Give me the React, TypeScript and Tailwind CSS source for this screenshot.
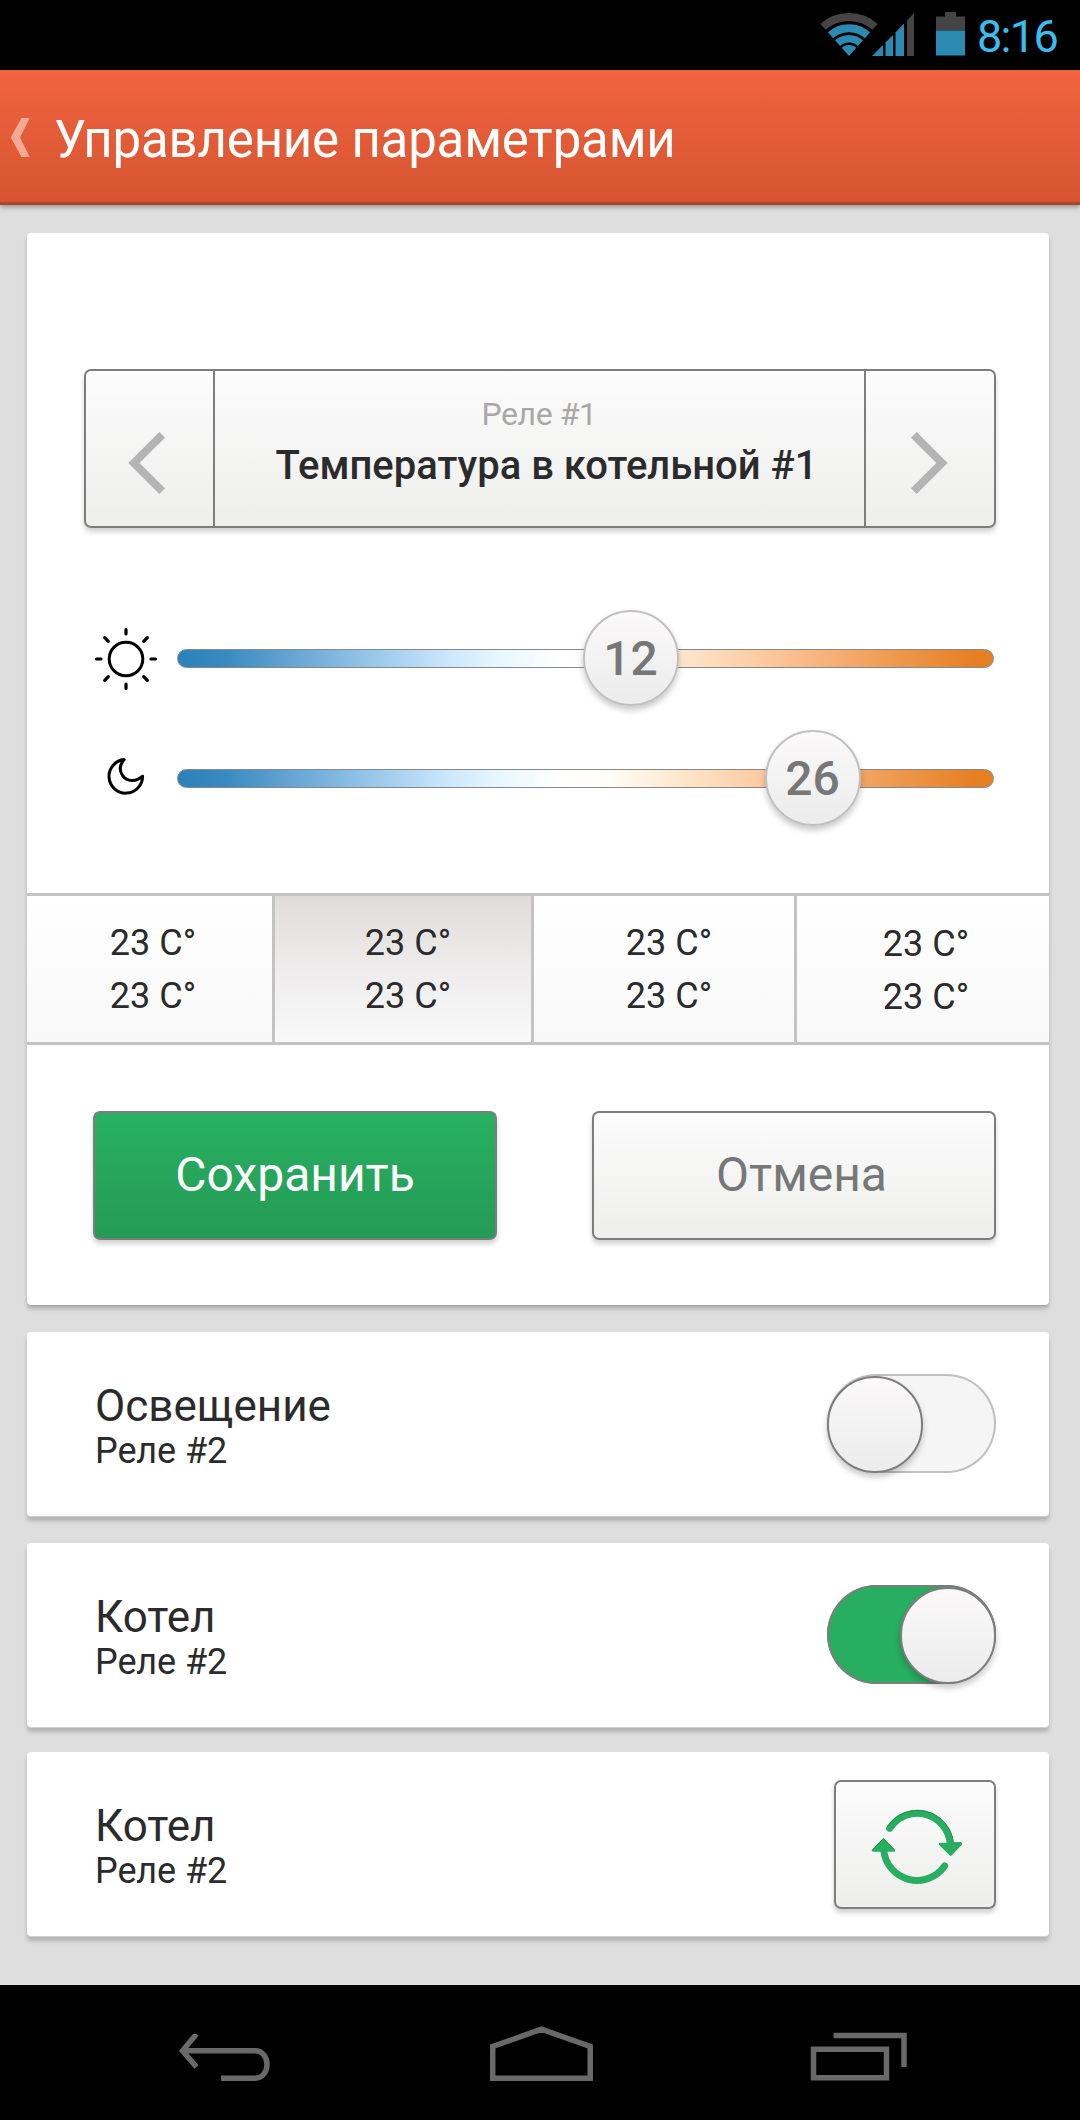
import React from "react";

function WifiIcon() {
  return (
    <svg width="58" height="44" viewBox="0 0 58 44">
      <defs>
        <clipPath id="fan">
          <path d="M29 43 L0 10.5 L-4 -6 H62 L58 10.5 Z" />
        </clipPath>
      </defs>
      <g clipPath="url(#fan)" fill="none">
        <circle cx="29" cy="43" r="39" stroke="#444444" strokeWidth="8" />
        <circle cx="29" cy="43" r="27.8" stroke="#2a8ab2" strokeWidth="8" />
        <circle cx="29" cy="43" r="17.2" stroke="#2a8ab2" strokeWidth="7.6" />
        <circle cx="29" cy="43" r="11" fill="#2a8ab2" />
      </g>
    </svg>
  );
}

function SignalIcon() {
  return (
    <svg width="43" height="44" viewBox="0 0 43 44">
      <g fill="#2a8ab2">
        <path d="M0 43 L11 32 V43 Z" />
        <path d="M13.5 29.5 L21 22 V43 H13.5 Z" />
        <path d="M23.5 19.5 L32 10.5 V43 H23.5 Z" />
      </g>
      <path d="M35 7.5 L42 0 V43 H35 Z" fill="#444444" />
    </svg>
  );
}

function BatteryIcon() {
  return (
    <svg width="29" height="44" viewBox="0 0 29 44">
      <path d="M0 4.5 H9 V0 H20 V4.5 H29 V18.5 H0 Z" fill="#444444" />
      <rect y="18.5" width="29" height="25" fill="#2a8ab2" />
    </svg>
  );
}

function SunIcon() {
  return (
    <svg width="64" height="64" viewBox="-32 -32 64 64" fill="none" stroke="#000" strokeWidth="3.2" strokeLinecap="round">
      <circle r="16.8" strokeWidth="3" />
      <path d="M0 -29.5V-25M0 25V29.5M-29.5 0H-25M25 0H29.5M-21.3 -21.3L-17.7 -17.7M17.7 17.7L21.3 21.3M-21.3 21.3L-17.7 17.7M17.7 -17.7L21.3 -21.3" />
    </svg>
  );
}

function MoonIcon() {
  return (
    <svg width="38" height="38" viewBox="0 0 38 38" fill="none" stroke="#000" strokeWidth="3" strokeLinejoin="round">
      <path d="M17.2 2.6 A16.8 16.8 0 1 0 35.6 19.2 C29 25.2 19.8 24.8 15.6 18.6 C12 13.2 13 7.2 17.2 2.6 Z" />
    </svg>
  );
}

function SyncIcon() {
  return (
    <svg width="92" height="76" viewBox="-46 -38 92 76">
      <g fill="none" stroke="#28ae60" strokeWidth="7" strokeLinecap="round">
        <path d="M-27.3 -18.6 A33 33 0 0 1 33.3 -3" />
        <path d="M27.6 19 A33.5 33.5 0 0 1 -33.3 3" />
      </g>
      <g fill="#28ae60" stroke="#28ae60" strokeWidth="2.5" strokeLinejoin="round">
        <path d="M23 -3 H44 L33.7 7.6 Z" />
        <path d="M-44 3.4 H-23 L-33.5 -7.4 Z" />
      </g>
      <g fill="none" stroke="#1f8c4c" strokeWidth="1" strokeLinecap="round">
        <path d="M-29.5 -20.5 A36 36 0 0 1 36.3 -4.2 H44" />
        <path d="M-43.5 2 L-33.5 -8.4 L-23.5 2" opacity=".8" />
      </g>
    </svg>
  );
}

function Chevron({ flip = false }: { flip?: boolean }) {
  return (
    <svg width="38" height="62" viewBox="0 0 38 62" className={flip ? "-scale-x-100" : ""}>
      <path d="M34.2 2.8 L6 31 L34.2 59.2" fill="none" stroke="#b4b4b4" strokeWidth="8" />
    </svg>
  );
}

function Slider({ icon, value, left }: { icon: React.ReactNode; value: string; left: number }) {
  return (
    <div className="flex h-24 items-center">
      <div className="flex w-[62px] justify-center">{icon}</div>
      <div className="relative ml-[20px] mt-px h-[19px] w-[817px] rounded-full border border-[#888888] bg-[linear-gradient(90deg,#2980b9_0%,#3a8bc1_6%,#66a5d3_14%,#93c4e8_23%,#cbe6fd_33%,#e6f6ff_39%,#ffffff_47%,#fffdf5_53%,#feecd4_60%,#fdc99f_72%,#f7b077_80%,#ee994f_88%,#e67e22_98%)]">
        <div
          className="absolute -top-[40px] flex size-24 items-center justify-center rounded-full border-2 border-[#c0c0c0] bg-linear-to-b from-[#fbf9fa] to-[#ececec] text-5xl leading-none font-medium text-[#777777] shadow-[0_4px_6px_rgba(0,0,0,0.22)]"
          style={{ left }}
        >
          <span className="pt-[2px] pr-px">{value}</span>
        </div>
      </div>
    </div>
  );
}

function Toggle({ on }: { on: boolean }) {
  return (
    <div
      className={
        on
          ? "flex h-[99px] w-[169px] items-end justify-end rounded-full bg-[#28ae60] shadow-[inset_0_0_0_2px_#7d7d7d]"
          : "flex h-[99px] w-[169px] items-end justify-start rounded-full bg-[#f5f5f5] shadow-[inset_0_0_0_2px_#c0c0c0]"
      }
    >
      <div className="h-[97px] w-24 rounded-full border-2 border-[#7d7d7d] bg-linear-to-b from-[#fbf9fa] to-[#ececec] shadow-[0_4px_6px_rgba(0,0,0,0.22)]" />
    </div>
  );
}

function DeviceCard({ title, subtitle, className, children }: { title: string; subtitle: string; className: string; children: React.ReactNode }) {
  return (
    <section className={`flex h-[184px] items-start justify-between rounded-[4px] bg-white pr-[53px] pl-[68px] text-[#2b2b2b] shadow-[0_1px_0_#d0d0d0,0_5px_4px_rgba(0,0,0,0.2)] ${className}`}>
      <div className="pt-[48px]">
        <h2 className="text-[44px] leading-[52px]">{title}</h2>
        <p className="-mt-px text-[36px] leading-[40px] tracking-[-0.1px]">{subtitle}</p>
      </div>
      {children}
    </section>
  );
}

const cells = [
  { box: "w-[248px] pl-[7px] pt-[21px] border-r-3", fill: "from-white to-[#f8f8f8]" },
  { box: "w-[259px] pl-[10px] pt-[21px] border-r-3", fill: "from-[#e0dcdb] via-[#eeecec] to-[#f9f9f9]" },
  { box: "w-[263px] pl-[10px] pt-[21px] border-r-3", fill: "from-white to-[#f8f8f8]" },
  { box: "w-[252px] pl-[6px] pt-[22px]", fill: "from-white to-[#f8f8f8]" },
];

export default function App() {
  return (
    <div className="flex h-[2120px] w-[1080px] flex-col overflow-hidden bg-[#dedede] font-[Roboto,sans-serif]">
      <div className="flex h-[70px] shrink-0 items-start bg-black pl-[820px]">
        <div className="mt-[13px]"><WifiIcon /></div>
        <div className="mt-[13px] -ml-[6px]"><SignalIcon /></div>
        <div className="mt-[12px] ml-[21px]"><BatteryIcon /></div>
        <div className="mt-[10px] ml-[12px] text-[45px] leading-[54px] tracking-[-1.7px] text-[#3abdf0]">8:16</div>
      </div>

      <header className="flex h-[135px] shrink-0 items-start border-b-3 border-[#ab4628] bg-linear-to-b from-[#f2633f] to-[#d55530] shadow-[0_2px_5px_rgba(0,0,0,0.35)]">
        <svg width="20" height="40" viewBox="0 0 20 40" className="mt-[48px] ml-[10px]">
          <path d="M11.5 0 H19.7 L10 19.5 L19.7 39 H11.5 L0.8 19.5 Z" fill="#f2aa98" />
        </svg>
        <h1 className="mt-[40px] ml-[24px] text-[51px] leading-[60px] tracking-[-0.2px] text-white">Управление параметрами</h1>
      </header>

      <main className="flex flex-1 flex-col pt-[28px] pr-[31px] pl-[27px]">
        <section className="h-[1072px] shrink-0 rounded-[4px] bg-white pt-[136px] shadow-[0_4px_4px_rgba(0,0,0,0.2),0_1px_1px_rgba(0,0,0,0.1)]">
          <div className="ml-[57px] flex h-[159px] w-[912px] rounded-[7px] border-2 border-[#7d7d7d] bg-linear-to-b from-[#fcfcfc] to-[#eeeeed] shadow-[0_4px_5px_rgba(0,0,0,0.18)]">
            <button className="flex w-[129px] items-start border-r-2 border-[#7d7d7d] pt-[61px] pl-[42px]"><Chevron /></button>
            <div className="flex-1 pt-[23px] text-center">
              <p className="pr-[1px] text-[32px] leading-[40px] tracking-[-0.4px] text-[#a8a8a8]">Реле #1</p>
              <p className="mt-[8px] pl-[14px] text-[40px] leading-[48px] font-medium whitespace-nowrap text-[#2b2b2b]">Температура в котельной #1</p>
            </div>
            <button className="flex w-[130px] items-start border-l-2 border-[#7d7d7d] pt-[61px] pl-[44px]"><Chevron flip /></button>
          </div>

          <div className="mt-[82px] flex flex-col gap-6 pl-[68px]">
            <Slider icon={<span className="relative top-px"><SunIcon /></span>} value="12" left={405} />
            <Slider icon={<span className="relative -top-[2px]"><MoonIcon /></span>} value="26" left={587} />
          </div>

          <div className="mt-[67px] flex h-[152px] border-y-3 border-[#c3c3c3]">
            {cells.map((c, i) => (
              <div key={i} className={`border-[#c3c3c3] bg-linear-to-b text-center text-[36px] leading-[53px] text-[#2b2b2b] ${c.box} ${c.fill}`}>
                <p>23 C°</p>
                <p>23 C°</p>
              </div>
            ))}
          </div>

          <div className="mt-[66px] flex justify-between pr-[53px] pl-[66px]">
            <button className="h-[129px] w-[404px] rounded-[7px] border-2 border-[#7d7d7d] bg-linear-to-b from-[#28b062] to-[#249b55] pb-[2px] text-5xl text-white shadow-[0_4px_5px_rgba(0,0,0,0.18)]">Сохранить</button>
            <button className="h-[129px] w-[404px] rounded-[7px] border-2 border-[#7d7d7d] bg-linear-to-b from-[#fcfcfc] to-[#eeeeed] pb-[2px] pl-[15px] text-5xl text-[#777777] shadow-[0_4px_5px_rgba(0,0,0,0.18)]">Отмена</button>
          </div>
        </section>

        <DeviceCard title="Освещение" subtitle="Реле #2" className="mt-[27px]">
          <div className="mt-[42px]"><Toggle on={false} /></div>
        </DeviceCard>
        <DeviceCard title="Котел" subtitle="Реле #2" className="mt-[27px]">
          <div className="mt-[42px]"><Toggle on /></div>
        </DeviceCard>
        <DeviceCard title="Котел" subtitle="Реле #2" className="mt-[25px]">
          <button className="mt-[28px] flex h-[129px] w-[162px] items-center justify-center rounded-[7px] border-2 border-[#7d7d7d] bg-linear-to-b from-[#fcfcfc] to-[#eeeeed] pl-[3px] pt-[4px] shadow-[0_4px_5px_rgba(0,0,0,0.18)]">
            <SyncIcon />
          </button>
        </DeviceCard>
      </main>

      <nav className="flex h-[135px] shrink-0 items-start bg-black">
        <svg width="92" height="48" viewBox="0 0 92 48" className="mt-[49px] ml-[179px]" fill="none" stroke="#696969" strokeWidth="5.5">
          <path d="M17.5 0 L3.5 16.8 L17.5 33" />
          <path d="M5 16.8 H76 C92 16.8 92 44.2 76 44.2 H42" />
        </svg>
        <svg width="104" height="56" viewBox="0 0 104 56" className="mt-[41px] ml-[219px]" fill="none" stroke="#696969" strokeWidth="5.5">
          <path d="M2.7 52.2 V20.5 L51.5 3.2 L100.2 20.5 V52.2 Z" />
        </svg>
        <svg width="97" height="49" viewBox="0 0 97 49" className="mt-[47px] ml-[216px]" fill="none" stroke="#696969" strokeWidth="5.5">
          <path d="M3.5 17.2 H76.5 V45.8 H3.5 Z" />
          <path d="M23.5 3.4 H94 V35" />
        </svg>
      </nav>
    </div>
  );
}
